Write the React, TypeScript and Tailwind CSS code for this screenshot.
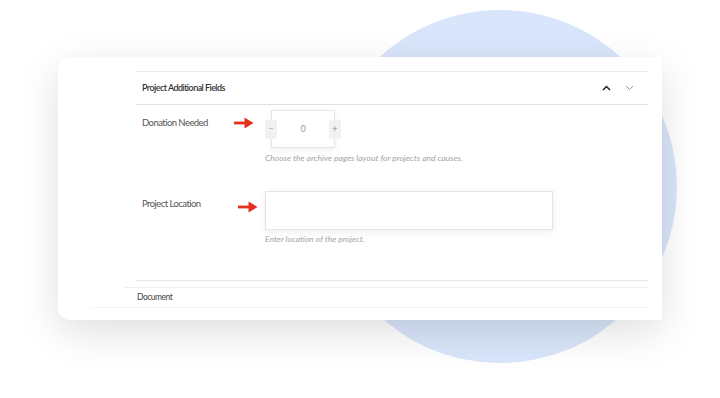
import React from "react";

const font = {
  fontFamily: '"Lato", "Liberation Sans", sans-serif',
};

const Arrow = ({ className }: { className?: string }) => (
  <svg width="20" height="12" viewBox="0 0 20 12" className={className}>
    <rect x="0" y="4.6" width="12" height="2.8" fill="#e5311c" />
    <polygon points="10.5,0.5 19.5,6 10.5,11.5" fill="#e5311c" />
  </svg>
);

const Chevron = ({ up, color }: { up?: boolean; color: string }) => (
  <svg width="9" height="6" viewBox="0 0 9 6">
    <path
      d={up ? "M1 5 L4.5 1.5 L8 5" : "M1 1 L4.5 4.5 L8 1"}
      fill="none"
      stroke={color}
      strokeWidth={up ? 1.5 : 1}
    />
  </svg>
);

const App = () => {
  return (
    <div className="relative w-[720px] h-[398px] overflow-hidden bg-white" style={font}>
      {/* decorative circle behind the card */}
      <div className="absolute left-[323px] top-[10px] w-[354px] h-[353px] rounded-full bg-[#d9e5fa]" />

      <div className="relative pt-[57px] pl-[58px]">
        <div className="w-[604px] h-[263px] bg-white rounded-l-[12px] shadow-[0_12px_40px_rgba(0,0,0,0.13)] pt-[14px] pr-[14px] overflow-hidden">
          <div className="ml-[78px] border-t border-[#ececec]">
            {/* header */}
            <div className="h-[33px] flex items-center justify-between pl-[6px] pr-[14px] border-b border-[#e1e1e1]">
              <span className="text-[9px] font-semibold text-[#333] tracking-[-0.55px]">
                Project Additional Fields
              </span>
              <div className="flex items-center gap-[14px]">
                <Chevron up color="#222" />
                <Chevron color="#9a9a9a" />
              </div>
            </div>

            {/* donation needed */}
            <div className="flex pl-[6px] pt-[5px]">
              <div className="w-[123px] flex justify-between items-start pt-[8px] pr-[11px]">
                <span className="text-[9.5px] text-[#555] tracking-[-0.55px] leading-[10px]">
                  Donation Needed
                </span>
                <Arrow className="-mt-[1px]" />
              </div>
              <div className="flex flex-col">
                <div className="ml-[6px] w-[64px] h-[38px] flex items-center justify-between border border-[#e4e4e4] bg-white shadow-[0_2px_6px_rgba(0,0,0,0.06)]">
                  <span className="-ml-[7px] w-[12px] h-[19px] rounded-[2px] bg-[#f1f1f1] flex items-center justify-center text-[9px] text-[#aaa]">
                    −
                  </span>
                  <span className="text-[9px] text-[#999]">0</span>
                  <span className="-mr-[7px] w-[12px] h-[19px] rounded-[2px] bg-[#f1f1f1] flex items-center justify-center text-[9px] text-[#888]">
                    +
                  </span>
                </div>
                <p className="mt-[4px] text-[8.5px] italic text-[#a3a3a3]">
                  Choose the archive pages layout for projects and causes.
                </p>
              </div>
            </div>

            {/* project location */}
            <div className="flex pl-[6px] pt-[26px]">
              <div className="w-[123px] flex justify-between items-start pt-[8px] pr-[7px]">
                <span className="text-[9.5px] text-[#555] tracking-[-0.55px] leading-[10px]">
                  Project Location
                </span>
                <Arrow className="mt-[2px]" />
              </div>
              <div className="flex flex-col">
                <div className="w-[288px] h-[39px] border border-[#e4e4e4] bg-white shadow-[0_2px_8px_rgba(0,0,0,0.07)]" />
                <p className="mt-[3px] text-[8.5px] italic text-[#a3a3a3]">
                  Enter location of the project.
                </p>
              </div>
            </div>

            <div className="mt-[34px] border-t border-[#e8e8e8]" />
          </div>

          {/* document row */}
          <div className="mt-[6px] ml-[66px] border-t border-[#f0f0f0]">
            <div className="h-[19px] flex items-center pl-[13px] text-[8.5px] text-[#444] tracking-[-0.5px]">
              Document
            </div>
          </div>
          <div className="ml-[32px] border-t border-[#f5f5f5]" />
        </div>
      </div>
    </div>
  );
};

export default App;
